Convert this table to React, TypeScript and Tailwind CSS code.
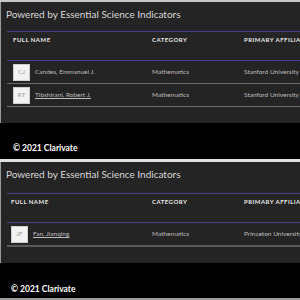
import React from "react";

type Row = { initials: string; name: string; cat: string; aff: string; link?: boolean };

function Section({ rows, left, rowLineClass, pad }: { rows: Row[]; left: number; rowLineClass: string; pad: { titleH: string; foot: string; spacer: string } }) {
  return (
    <div>
      <div className="bg-[#242424] border-l border-[#9a9a9a]">
        <div className={`${pad.titleH} pl-[5px] pt-[6px] text-[10px] leading-[13px] text-[#d8d8d8] whitespace-nowrap`}>
          Powered by Essential Science Indicators
        </div>
        <div className="ml-[6px] h-px bg-[#4b3c8e]" />
        <div className="h-[28px] pt-[4px] flex text-[6px] leading-[8px] font-bold tracking-[0.08em] text-[#e8e8e8] whitespace-nowrap">
          <div className="shrink-0" style={{ width: 152 - 1, paddingLeft: left - 1 }}>FULL NAME</div>
          <div className="shrink-0 w-[92px]">CATEGORY</div>
          <div className="shrink-0">PRIMARY AFFILIATION</div>
        </div>
        <div className="ml-[6px] h-px bg-[#4b3c8e]" />
        {rows.map((r) => (
          <div key={r.name}>
            <div className="h-[22px] flex items-center text-[6.5px] text-[#bdbdbd] whitespace-nowrap">
              <div className="shrink-0 flex items-center" style={{ width: 152 - 1, paddingLeft: left - 1 }}>
                <div className="w-[17px] h-[17px] bg-[#f2f2f2] border border-[#cfcfcf] flex items-center justify-center text-[6.5px] text-[#a0a0a0]">
                  {r.initials}
                </div>
                <div className={`ml-[5px] ${r.link ? "underline" : ""}`}>{r.name}</div>
              </div>
              <div className="shrink-0 w-[92px]">{r.cat}</div>
              <div className="shrink-0">{r.aff}</div>
            </div>
            <div className={`ml-[6px] ${rowLineClass}`} />
          </div>
        ))}
        <div className={pad.spacer} />
      </div>
      <div className={`bg-black ${pad.foot} text-[8.5px] leading-[10px] font-bold text-white whitespace-nowrap`} style={{ paddingLeft: left }}>
        © 2021 Clarivate
      </div>
    </div>
  );
}

export default function App() {
  return (
    <div className="w-[300px] h-[300px] overflow-hidden bg-black" style={{ fontFamily: "Lato, 'Noto Sans', sans-serif" }}>
      <div className="h-[2px] bg-[#c8c8c8]" />
      <Section
        left={13}
        rowLineClass="h-px bg-[#6a6a6a]"
        pad={{ titleH: "h-[29px]", foot: "h-[36px] pt-[20px]", spacer: "h-[16px]" }}
        rows={[
          { initials: "CJ", name: "Candes, Emmanuel J.", cat: "Mathematics", aff: "Stanford University" },
          { initials: "RT", name: "Tibshirani, Robert J.", cat: "Mathematics", aff: "Stanford University", link: true },
        ]}
      />
      <div className="h-[3px] bg-[#e0e0e0]" />
      <Section
        left={11}
        rowLineClass="h-[2px] bg-[#5a5a5a]"
        pad={{ titleH: "h-[31px]", foot: "h-[35px] pt-[21px]", spacer: "h-[16px]" }}
        rows={[{ initials: "JF", name: "Fan, Jianqing", cat: "Mathematics", aff: "Princeton University", link: true }]}
      />
      <div className="h-[3px] bg-[#9a9a9a]" />
    </div>
  );
}
